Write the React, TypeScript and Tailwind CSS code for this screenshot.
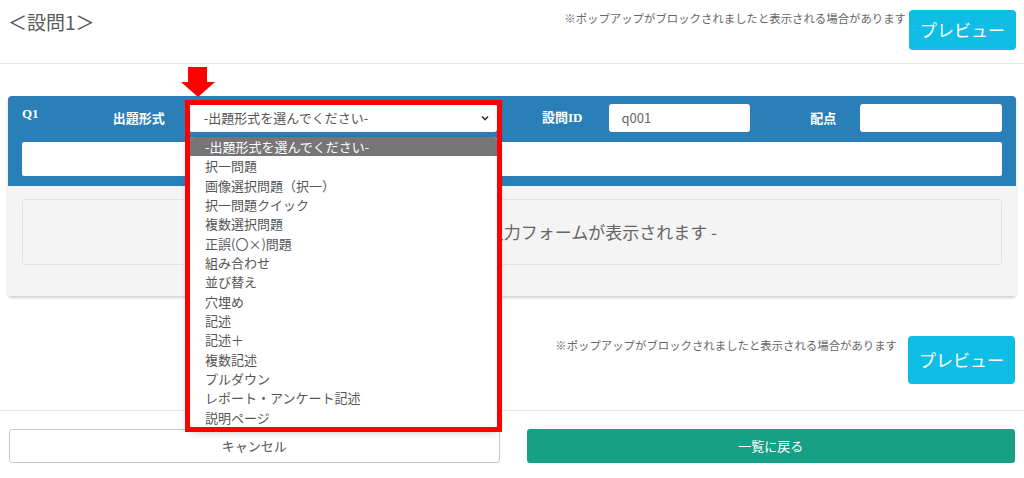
import React from "react";

const options = [
  "-出題形式を選んでください-",
  "択一問題",
  "画像選択問題（択一）",
  "択一問題クイック",
  "複数選択問題",
  "正誤(〇×)問題",
  "組み合わせ",
  "並び替え",
  "穴埋め",
  "記述",
  "記述＋",
  "複数記述",
  "プルダウン",
  "レポート・アンケート記述",
  "説明ページ",
];

const jp = { fontFamily: '"Noto Sans CJK JP", "Noto Sans", sans-serif' };

export default function App() {
  return (
    <div className="relative w-[1024px] h-[478px] overflow-hidden bg-white text-[#555]" style={jp}>
      {/* header */}
      <div className="flex justify-between border-b border-[#e6e6e6] h-[64px] px-[8px]">
        <div className="pt-[8px] text-[19px] leading-[28px] text-[#5a5a5a]">＜設問1＞</div>
        <div className="flex items-start pt-[10px]">
          <div className="text-[11.4px] leading-[14px] text-[#666] mt-[1px]">※ポップアップがブロックされましたと表示される場合があります</div>
          <button className="ml-[3px] w-[107px] h-[40px] rounded-[4px] bg-[#0fbde5] text-white text-[17px]">プレビュー</button>
        </div>
      </div>

      {/* panel */}
      <div className="mx-[8px] mt-[32px] rounded-[4px] shadow-[0_2px_3px_rgba(0,0,0,0.18)] overflow-hidden">
        <div className="bg-[#2b7fb9] px-[14px] pt-[8px] pb-[10px]">
          <div className="flex items-start h-[28px]">
            <div className="w-[72px] text-[13px] font-bold text-white" style={{ fontFamily: '"Liberation Serif", "Noto Sans CJK JP", serif' }}>Q1</div>
            <div className="w-[95px] flex items-center h-[28px] justify-end pr-[24px] text-[13px] font-bold text-white">出題形式</div>
            <div className="w-[308px] h-[28px] bg-white rounded-[3px] flex items-center justify-between pl-[15px] pr-[7px] text-[13px] text-[#555]">
              <span>-出題形式を選んでください-</span>
              <svg width="10" height="10" viewBox="0 0 10 10"><path d="M2 3.5 L5 6.5 L8 3.5" fill="none" stroke="#333" strokeWidth="1.6" /></svg>
            </div>
            <div className="w-[113px] flex items-center h-[28px] justify-end pr-[27px] text-[13px] font-bold text-white" style={{ fontFamily: '"Liberation Serif", "Noto Sans CJK JP", serif' }}>設問ID</div>
            <div className="w-[141px] h-[28px] bg-white rounded-[3px] flex items-center pl-[12px] text-[13px] text-[#666]">q001</div>
            <div className="w-[110px] flex items-center h-[28px] justify-end pr-[24px] text-[13px] font-bold text-white">配点</div>
            <div className="w-[142px] h-[28px] bg-white rounded-[3px]"></div>
          </div>
          <div className="mt-[10px] h-[34px] bg-white rounded-[2px]"></div>
        </div>
        <div className="bg-[#f4f4f4] px-[14px] pt-[13px] pb-[31px]">
          <div className="h-[66px] border border-[#e2e2e2] rounded-[3px] flex items-center justify-center text-[17px] text-[#666]">
            - 出題形式を選択すると入力フォームが表示されます -
          </div>
        </div>
      </div>

      {/* lower preview */}
      <div className="flex justify-end items-start mt-[40px] pr-[9px]">
        <div className="text-[11.4px] leading-[14px] text-[#666] mt-[2px] mr-[11px]">※ポップアップがブロックされましたと表示される場合があります</div>
        <button className="w-[107px] h-[48px] rounded-[4px] bg-[#0fbde5] text-white text-[17px]">プレビュー</button>
      </div>
      <div className="mt-[26px] border-t border-[#e6e6e6]"></div>
      <div className="flex gap-[27px] px-[9px] mt-[18px]">
        <button className="flex-1 h-[34px] rounded-[3px] border border-[#c8c8c8] bg-white text-[13px] text-[#555]">キャンセル</button>
        <button className="flex-1 h-[34px] rounded-[3px] bg-[#17a086] text-white text-[13px]">一覧に戻る</button>
      </div>

      {/* annotation arrow */}
      <svg className="absolute left-[180px] top-[66px]" width="36" height="32" viewBox="0 0 36 32">
        <polygon points="8,1 27,1 27,16 35,16 18,31 1,16 8,16" fill="#ff0000" />
      </svg>

      {/* open dropdown list */}
      <div className="absolute left-[190px] top-[137px] w-[307px] h-[291px] bg-white rounded-[4px] shadow-[0_3px_8px_rgba(0,0,0,0.3)] overflow-hidden">
        {options.map((o, i) => (
          <div
            key={o}
            className={
              i === 0
                ? "h-[19.33px] leading-[19.33px] pl-[15px] text-[13px] bg-[#767676] text-white"
                : "h-[19.33px] leading-[19.33px] pl-[15px] text-[13px] text-[#555]"
            }
          >
            {o}
          </div>
        ))}
      </div>

      {/* red highlight box */}
      <div className="absolute left-[185px] top-[100px] w-[317px] h-[332px] border-[5px] border-[#ff0000] pointer-events-none"></div>
    </div>
  );
}
